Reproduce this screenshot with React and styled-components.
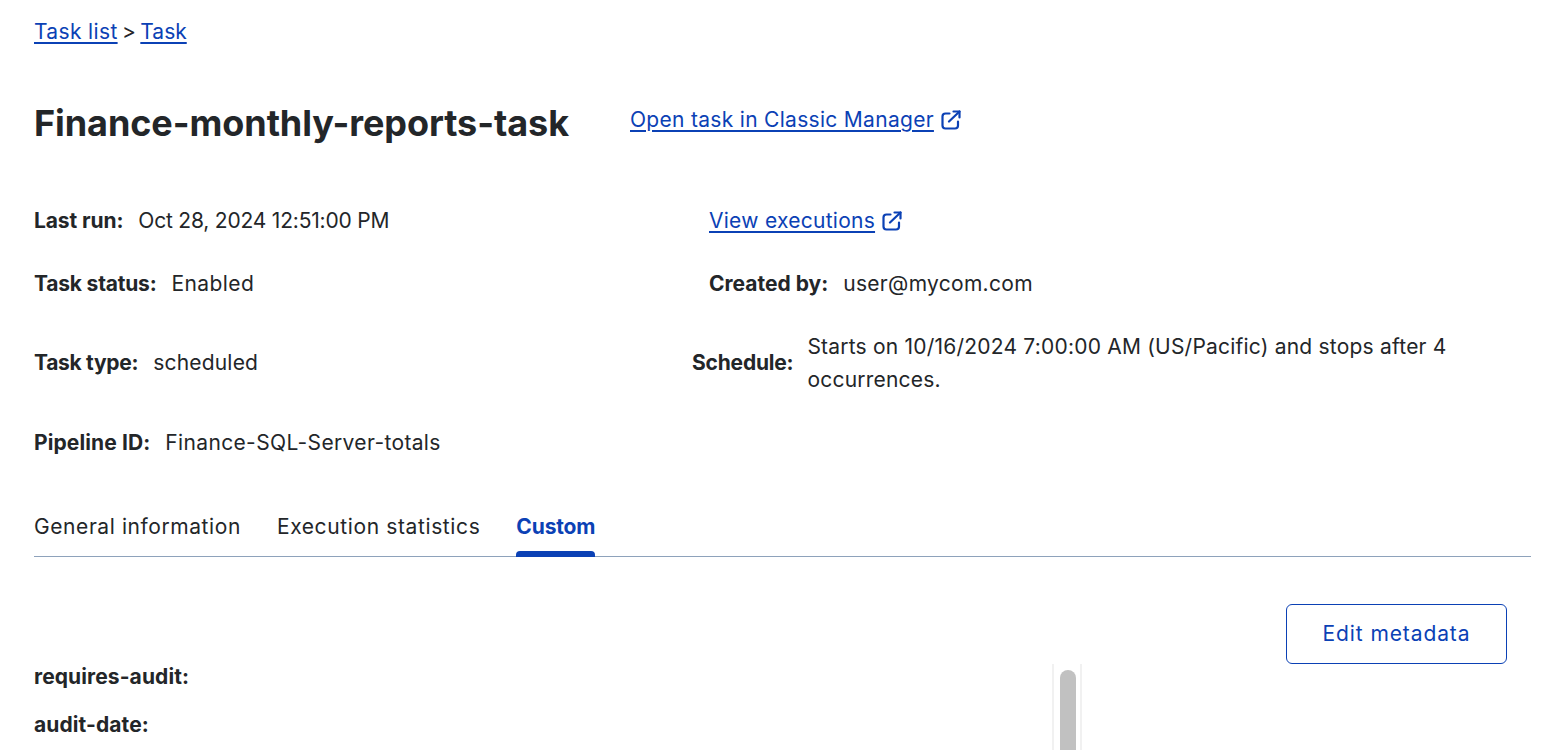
import React from "react";
import styled, { createGlobalStyle } from "styled-components";

const Global = createGlobalStyle`
  html, body { margin: 0; padding: 0; height: 750px; overflow: hidden; background: #fff; }
  body { font-family: "Inter", "Liberation Sans", sans-serif; color: #232629; }
  * { box-sizing: border-box; }
`;
const Page = styled.div`
  padding: 16px 29px 0 34px;
  height: 750px;
  overflow: hidden;
  font-size: 21px;
`;
const A = styled.a`
  color: #0b41b5;
  text-decoration: underline;
  text-underline-offset: 3px;
  text-decoration-thickness: 1.5px;
  letter-spacing: ${p => p.$ls || 0}px;
  cursor: pointer;
`;
const Crumbs = styled.nav`
  line-height: 32px;
  height: 32px;
`;
const Sep = styled.span`
  margin: 0 -1.5px;
`;
const TitleRow = styled.div`
  display: flex;
  align-items: flex-start;
  margin-top: 50px;
  height: 66px;
`;
const Title = styled.h1`
  margin: 0;
  font-size: 36px;
  line-height: 50px;
  font-weight: 700;
  letter-spacing: -0.07px;
  width: 596px;
  white-space: nowrap;
`;
const ExtLink = styled(A)`
  display: inline-flex;
  align-items: center;
  gap: 7px;
  margin-top: ${p => p.$top || 0}px;
`;
const Meta = styled.div`
  display: grid;
  grid-template-columns: 658px 1fr;
  grid-template-rows: 63px 63px 95px 65px;
  margin-top: 25px;
`;
const Cell = styled.div`
  display: flex;
  align-items: center;
  padding-left: ${p => p.$indent || 0}px;
  line-height: 33px;
`;
const Label = styled.span`
  font-weight: 700;
  margin-right: ${p => p.$gap || 15}px;
  white-space: nowrap;
  letter-spacing: ${p => p.$ls || 0}px;
`;
const Value = styled.span`
  letter-spacing: ${p => p.$ls || 0}px;
`;
const Tabs = styled.div`
  display: flex;
  gap: 36px;
  border-bottom: 1px solid #8ea2bb;
  margin-top: 24px;
  height: 58px;
`;
const Tab = styled.div`
  position: relative;
  line-height: 56px;
  letter-spacing: ${p => p.$ls || 0}px;
  color: ${p => (p.$active ? "#0b41b5" : "#232629")};
  font-weight: ${p => (p.$active ? 700 : 400)};
  &::after {
    content: "";
    display: ${p => (p.$active ? "block" : "none")};
    position: absolute;
    left: 0; right: 0; bottom: -1px;
    height: 6px;
    background: #0b41b5;
    border-radius: 4px 4px 0 0;
  }
`;
const Actions = styled.div`
  display: flex;
  justify-content: flex-end;
  padding: 47px 24px 0 0;
`;
const Button = styled.button`
  width: 221px;
  height: 60px;
  padding: 0 0 2px;
  font: inherit;
  letter-spacing: 0.9px;
  color: #0b41b5;
  background: #fff;
  border: 1px solid #0b41b5;
  border-radius: 6px;
`;
const Custom = styled.div`
  display: flex;
  width: 1048px;
  height: 200px;
`;
const Fields = styled.div`
  flex: 1;
`;
const Field = styled.div`
  font-weight: 700;
  line-height: 26px;
  margin-bottom: 22px;
  letter-spacing: 0.1px;
`;
const Track = styled.div`
  width: 30px;
  height: 200px;
  padding: 6px 8px 0;
  background: #fff;
  border-left: 2px solid #f1f1f1;
  border-right: 2px solid #f1f1f1;
`;
const Thumb = styled.div`
  width: 16px;
  height: 190px;
  margin-left: -2px;
  border-radius: 8px;
  background: #c1c1c1;
`;

const ExternalIcon = () => (
  <svg width="20" height="20" viewBox="0 0 20 20" fill="none" stroke="#0b41b5" strokeWidth="2.2" strokeLinecap="round" strokeLinejoin="round">
    <path d="M8.5 3.5H4.5a3 3 0 0 0-3 3v9a3 3 0 0 0 3 3h9.5a3 3 0 0 0 3-3v-4" />
    <path d="M8 11.5 18.5 1.5" />
    <path d="M12.5 1.5h6v6" />
  </svg>
);

export default function App() {
  return (
    <Page>
      <Global />
      <Crumbs><A $ls={0.35}>Task list</A> <Sep>&gt;</Sep> <A>Task</A></Crumbs>
      <TitleRow>
        <Title>Finance-monthly-reports-task</Title>
        <ExtLink $ls={0.3} $top={9}>Open task in Classic Manager <ExternalIcon /></ExtLink>
      </TitleRow>
      <Meta>
        <Cell><Label $ls={-0.1}>Last run:</Label><Value $ls={-0.2}>Oct 28, 2024 12:51:00 PM</Value></Cell>
        <Cell $indent={17}><ExtLink $ls={0.27}>View executions <ExternalIcon /></ExtLink></Cell>
        <Cell><Label $ls={-0.2}>Task status:</Label><Value $ls={0.4}>Enabled</Value></Cell>
        <Cell $indent={17}><Label>Created by:</Label><Value $ls={0.3}>user@mycom.com</Value></Cell>
        <Cell><Label $ls={-0.3}>Task type:</Label><Value $ls={0.2}>scheduled</Value></Cell>
        <Cell><Label $ls={-0.2} $gap={14}>Schedule:</Label><Value $ls={0.21}>Starts on 10/16/2024 7:00:00 AM (US/Pacific) and stops after 4 occurrences.</Value></Cell>
        <Cell><Label $ls={0.1}>Pipeline ID:</Label><Value $ls={0.36}>Finance-SQL-Server-totals</Value></Cell>
        <Cell />
      </Meta>
      <Tabs>
        <Tab $ls={0.58}>General information</Tab>
        <Tab $ls={0.62}>Execution statistics</Tab>
        <Tab $active $ls={-0.15}>Custom</Tab>
      </Tabs>
      <Actions><Button>Edit metadata</Button></Actions>
      <Custom>
        <Fields>
          <Field>requires-audit:</Field>
          <Field>audit-date:</Field>
        </Fields>
        <Track><Thumb /></Track>
      </Custom>
    </Page>
  );
}
